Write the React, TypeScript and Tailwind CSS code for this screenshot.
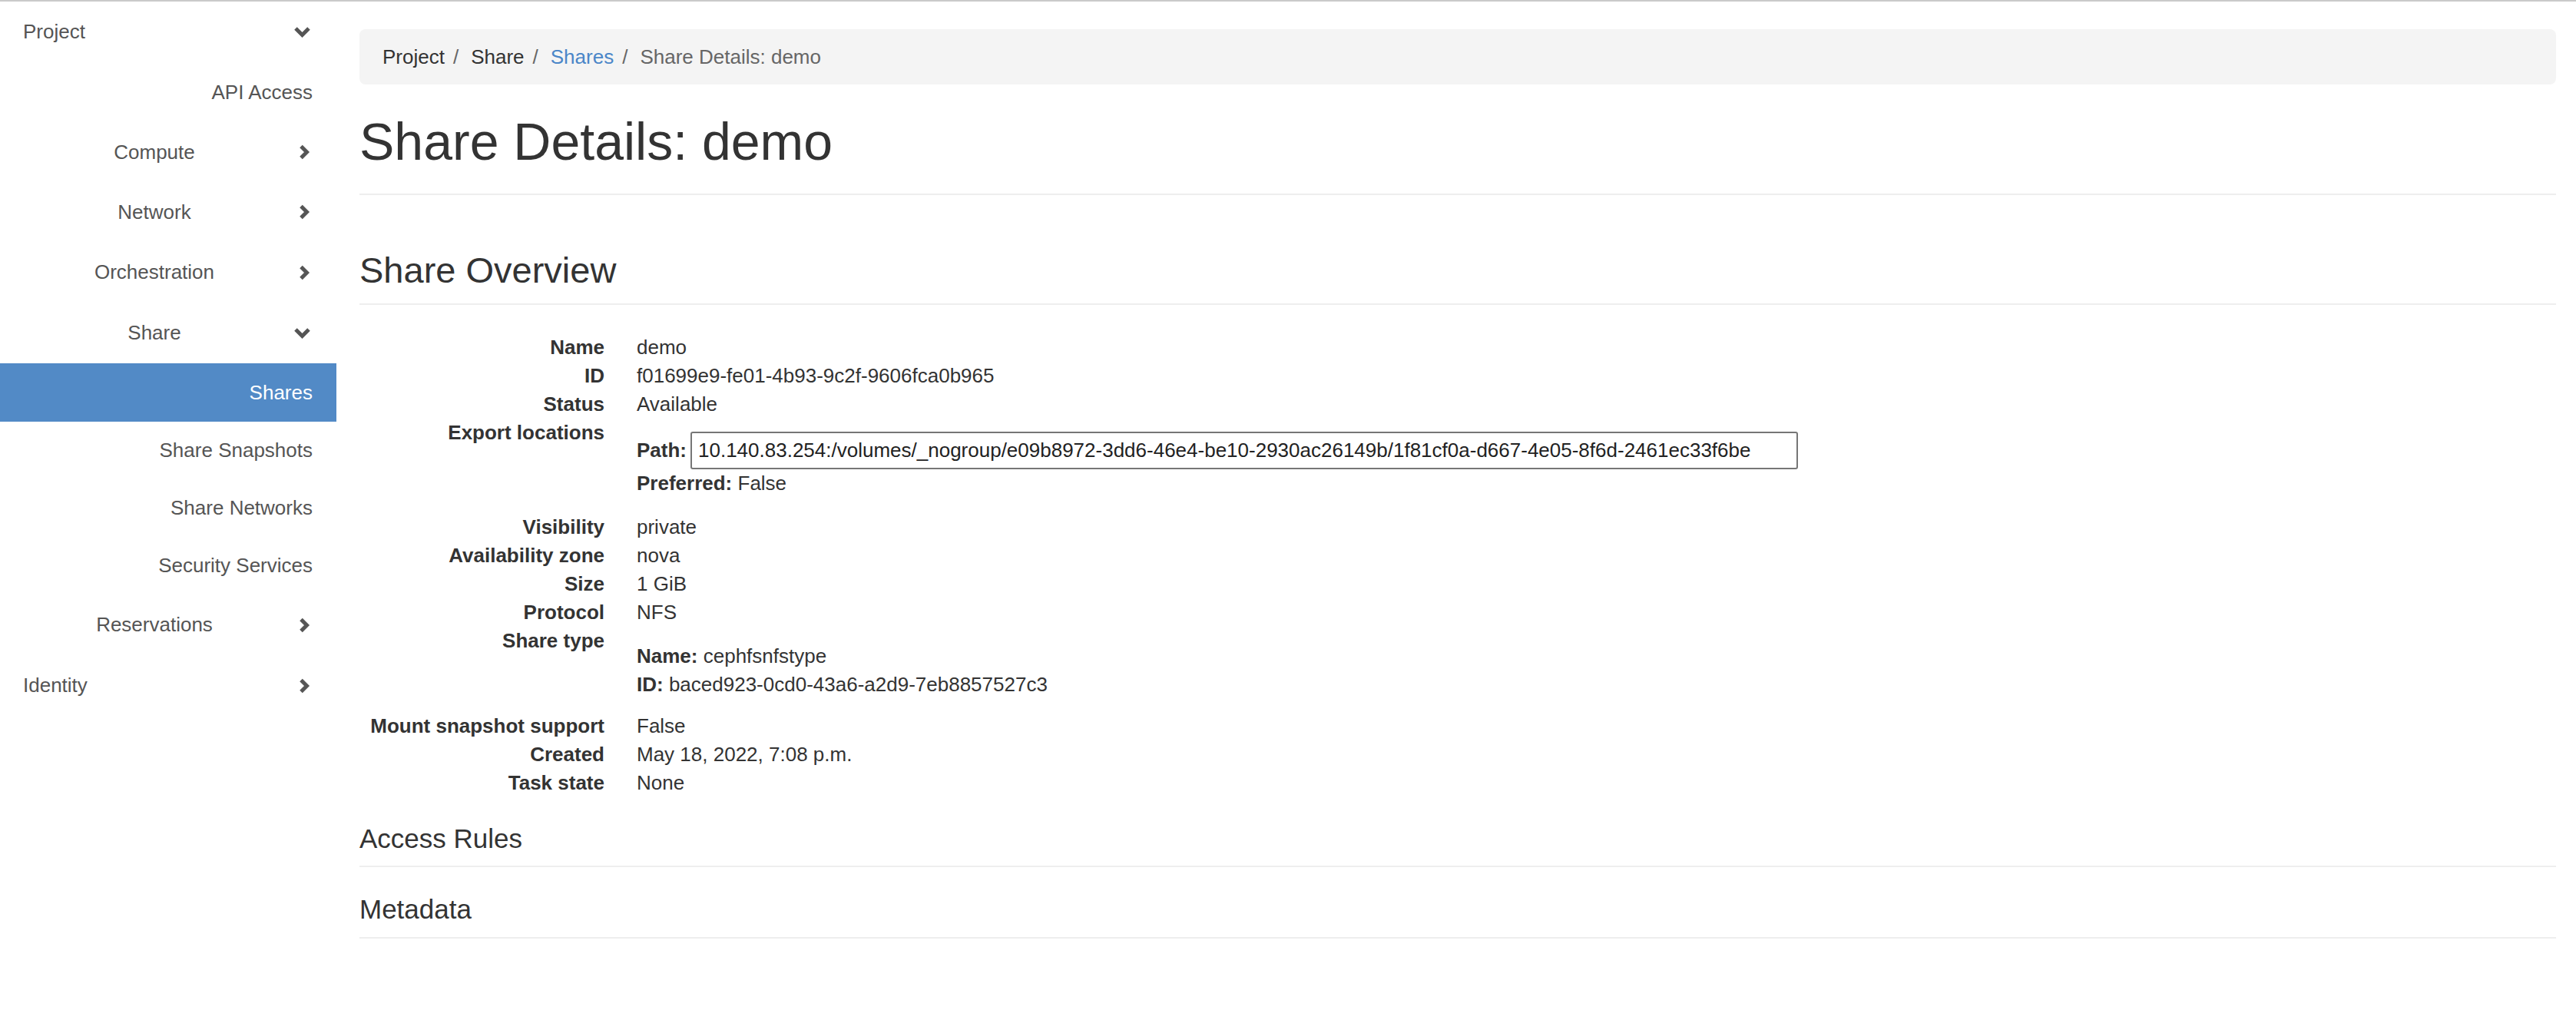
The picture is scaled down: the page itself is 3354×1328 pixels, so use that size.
import React from 'react';

type NavItem = {
  label: string;
  kind: 'section' | 'group' | 'leaf';
  open?: boolean;
  active?: boolean;
  height: string;
};

const navItems: NavItem[] = [
  { label: 'Project', kind: 'section', open: true, height: 'h-[79px]' },
  { label: 'API Access', kind: 'leaf', height: 'h-[78px]' },
  { label: 'Compute', kind: 'group', height: 'h-[78px]' },
  { label: 'Network', kind: 'group', height: 'h-[78px]' },
  { label: 'Orchestration', kind: 'group', height: 'h-[79px]' },
  { label: 'Share', kind: 'group', open: true, height: 'h-[79px]' },
  { label: 'Shares', kind: 'leaf', active: true, height: 'h-[76px]' },
  { label: 'Share Snapshots', kind: 'leaf', height: 'h-[75px]' },
  { label: 'Share Networks', kind: 'leaf', height: 'h-[75px]' },
  { label: 'Security Services', kind: 'leaf', height: 'h-[75px]' },
  { label: 'Reservations', kind: 'group', height: 'h-[79px]' },
  { label: 'Identity', kind: 'section', height: 'h-[79px]' },
];

const Chevron: React.FC<{ open?: boolean }> = ({ open }) => (
  <span className="w-[23px] shrink-0 flex justify-end">
    {open ? (
      <svg width="23" height="16" viewBox="0 0 23 16">
        <polyline points="3,3 11.5,11.5 20,3" fill="none" stroke="#555" strokeWidth="5" />
      </svg>
    ) : (
      <svg width="16" height="20" viewBox="0 0 16 20">
        <polyline points="3,2.5 10.5,10 3,17.5" fill="none" stroke="#555" strokeWidth="5" />
      </svg>
    )}
  </span>
);

const SideNav: React.FC = () => (
  <nav className="w-[438px] shrink-0 text-[26px] text-[#555]">
    {navItems.map((item) => {
      if (item.kind === 'leaf') {
        return (
          <div
            key={item.label}
            className={`${item.height} flex items-center justify-end pr-[31px] ${
              item.active ? 'bg-[#528ac6] text-white' : ''
            }`}
          >
            {item.label}
          </div>
        );
      }
      return (
        <div
          key={item.label}
          className={`${item.height} flex items-center pr-[33px] ${item.kind === 'section' ? 'pl-[30px]' : 'pl-[20px]'}`}
        >
          <span className={`flex-1 ${item.kind === 'section' ? 'text-left' : 'text-center'}`}>{item.label}</span>
          <Chevron open={item.open} />
        </div>
      );
    })}
  </nav>
);

const Row: React.FC<{ label: string; children: React.ReactNode }> = ({ label, children }) => (
  <div className="flex items-start">
    <dt className="w-[319px] shrink-0 text-right font-bold">{label}</dt>
    <dd className="ml-[42px]">{children}</dd>
  </div>
);

const exportPath =
  '10.140.83.254:/volumes/_nogroup/e09b8972-3dd6-46e4-be10-2930ac26149b/1f81cf0a-d667-4e05-8f6d-2461ec33f6be';

export default function App() {
  return (
    <div className="min-h-[1328px] bg-white text-[#333] font-['Liberation_Sans','Helvetica_Neue',Arial,sans-serif]">
      <div className="h-[2px] bg-[#cacaca]" />
      <div className="flex">
        <SideNav />
        <main className="flex-1 pl-[30px] pr-[26px] pt-[36px]">
          <ol className="h-[72px] flex items-center rounded-[8px] bg-[#f4f4f4] pl-[30px] text-[26px]">
            <li>Project</li>
            <li className="ml-[11px] mr-[16px] text-[#666]">/</li>
            <li>Share</li>
            <li className="ml-[11px] mr-[16px] text-[#666]">/</li>
            <li className="text-[#4a86c8]">Shares</li>
            <li className="ml-[11px] mr-[16px] text-[#666]">/</li>
            <li className="text-[#666]">Share Details: demo</li>
          </ol>

          <div className="mt-[37px] pb-[30px] border-b-2 border-[#eeeeee]">
            <h1 className="text-[68px] leading-[1.1]">Share Details: demo</h1>
          </div>

          <div className="mt-[73px] pb-[18px] border-b-2 border-[#eeeeee]">
            <h3 className="text-[47px] leading-[50px]">Share Overview</h3>
          </div>

          <dl className="mt-[37px] text-[26px] leading-[37px]">
            <Row label="Name">demo</Row>
            <Row label="ID">f01699e9-fe01-4b93-9c2f-9606fca0b965</Row>
            <Row label="Status">Available</Row>
            <Row label="Export locations">
              <div className="pt-[17px] pb-[20px]">
                <div className="h-[49px] flex items-center">
                  <span className="font-bold">Path:</span>
                  <input
                    readOnly
                    value={exportPath}
                    className="ml-[5px] w-[1442px] h-[49px] px-[8px] border-2 border-[#767676] rounded-[3px] text-[26px] text-[#222] outline-none"
                  />
                </div>
                <div>
                  <span className="font-bold">Preferred:</span> False
                </div>
              </div>
            </Row>
            <Row label="Visibility">private</Row>
            <Row label="Availability zone">nova</Row>
            <Row label="Size">1 GiB</Row>
            <Row label="Protocol">NFS</Row>
            <Row label="Share type">
              <div className="pt-[20px] pb-[17px]">
                <div>
                  <span className="font-bold">Name:</span> cephfsnfstype
                </div>
                <div>
                  <span className="font-bold">ID:</span> baced923-0cd0-43a6-a2d9-7eb8857527c3
                </div>
              </div>
            </Row>
            <Row label="Mount snapshot support">False</Row>
            <Row label="Created">May 18, 2022, 7:08 p.m.</Row>
            <Row label="Task state">None</Row>
          </dl>

          <div className="mt-[35px] pb-[17px] border-b-2 border-[#eeeeee]">
            <h4 className="text-[35px] leading-[37px]">Access Rules</h4>
          </div>

          <div className="mt-[36px] pb-[18px] border-b-2 border-[#eeeeee]">
            <h4 className="text-[35px] leading-[37px]">Metadata</h4>
          </div>
        </main>
      </div>
    </div>
  );
}
